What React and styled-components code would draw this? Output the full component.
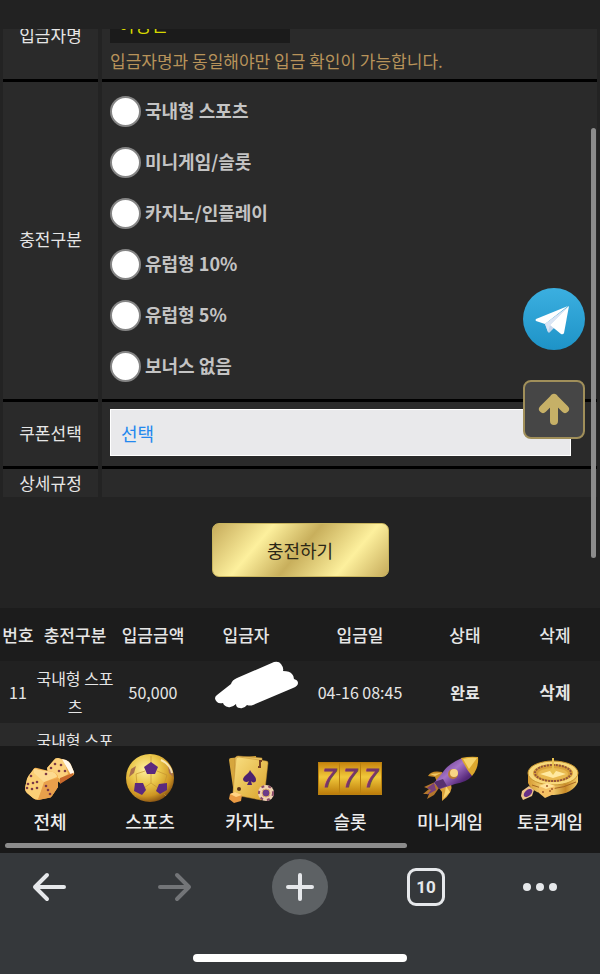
import React, { useLayoutEffect, useRef, useState } from "react";
import styled, { createGlobalStyle } from "styled-components";

const GlobalStyle = createGlobalStyle`
  * {
    box-sizing: border-box;
  }

  body {
    margin: 0;
    background: #232323;
    color: #e6e6e6;
    font-family: "Noto Sans CJK KR", "Noto Sans", sans-serif;
    font-size: 17px;
  }

  button, input, select {
    font-family: inherit;
  }
`

const Page = styled.div`
  display: flex;
  flex-direction: column;
  height: 100vh;
  overflow: hidden;
`

const StatusBar = styled.header`
  flex: none;
  height: 29px;
  background: #222222;
`

const Viewport = styled.div`
  position: relative;
  flex: 1;
  min-height: 0;
`

const Scroller = styled.main`
  height: 100%;
  overflow-y: auto;
  scrollbar-width: none;
`

const Form = styled.form`
  display: flex;
  flex-direction: column;
  padding: 0 3px;
`

const FormRow = styled.div`
  display: grid;
  grid-template-columns: 95px 1fr;
  gap: 4px;
`

const LabelCell = styled.div`
  display: flex;
  align-items: center;
  justify-content: center;
  padding-bottom: ${props => props.$last ? '0' : '3px'};
  background: #2a2a2a;
  border-bottom: ${props => props.$last ? 'none' : '3px solid #000000'};
  line-height: 28px;
`

const FieldCell = styled.div`
  padding: ${props => props.$padding || '0'};
  background: #2a2a2a;
  border-bottom: ${props => props.$last ? 'none' : '3px solid #000000'};
`

const NameInput = styled.input`
  display: block;
  width: 180px;
  height: 38px;
  padding: 0 8px;
  border: none;
  background: #1b1b1b;
  color: #d6d800;
  font-size: 18px;
`

const Hint = styled.p`
  margin: 0;
  line-height: 36px;
  color: #b8935a;
`

const Option = styled.label`
  display: flex;
  align-items: center;
  gap: 4px;
  height: 51px;
  color: #c4c4c4;
  font-size: 18px;
  font-weight: 700;
`

const OptionText = styled.span`
  padding-bottom: 4px;
`

const Radio = styled.input`
  appearance: none;
  width: 31px;
  height: 31px;
  margin: 0;
  border: 2px solid #858585;
  border-radius: 50%;
  background: #ffffff;

  &:checked {
    background: radial-gradient(circle, #1a73e8 45%, #ffffff 50%);
  }
`

const CouponSelect = styled.select`
  appearance: none;
  display: block;
  width: calc(100% - 18px);
  height: 47px;
  padding: 0 10px;
  border: 1px solid #ffffff;
  border-radius: 0;
  background: #e9e9eb;
  color: #2388ee;
  font-size: 18px;
`

const SubmitButton = styled.button`
  align-self: center;
  width: 177px;
  height: 54px;
  margin: 26px 0 31px;
  border: 1px solid #c9b65f;
  border-radius: 7px;
  background: linear-gradient(130deg, #c6ab5b 0%, #fdf09d 28%, #c8af5c 50%, #fdf09d 76%, #c6ab5b 100%);
  color: #2b2716;
  font-size: 18px;
`

const History = styled.table`
  width: 100%;
  table-layout: fixed;
  border-collapse: collapse;
`

const HeadCell = styled.th`
  width: ${props => props.$width};
  height: 53px;
  padding: 0;
  background: #1c1c1c;
  font-weight: 500;
  white-space: nowrap;
`

const HistoryRow = styled.tr`
  background: ${props => props.$alt ? '#2a2a2a' : '#212121'};
`

const Cell = styled.td`
  padding: 3px 0;
  height: 62px;
  font-size: 16px;
  font-weight: ${props => props.$bold ? 700 : 400};
  line-height: 28px;
  text-align: center;
`

const DeleteButton = styled.button`
  padding: 0;
  border: none;
  background: none;
  color: inherit;
  font-size: 17px;
  font-weight: 700;
`

const Scribble = styled.svg`
  display: block;
  width: 100%;
  height: 56px;
  overflow: visible;
`

const Floating = styled.aside`
  position: absolute;
  top: 259px;
  right: 15px;
  display: flex;
  flex-direction: column;
  gap: 30px;
`

const TelegramLink = styled.a`
  display: block;
  width: 62px;
  height: 62px;
`

const TopButton = styled.button`
  width: 62px;
  height: 59px;
  padding: 0;
  border: 2px solid #a08f5a;
  border-radius: 8px;
  background: #464646;
`

const ScrollThumb = styled.div`
  position: absolute;
  top: 99px;
  right: 4px;
  width: 5px;
  height: 430px;
  border-radius: 3px;
  background: #8c8c8c;
`

const GameMenu = styled.nav`
  flex: none;
  display: flex;
  flex-wrap: wrap;
  height: 107px;
  padding-top: 8px;
  background: #191919;
`

const GameLink = styled.a`
  display: flex;
  flex-direction: column;
  align-items: center;
  width: calc(100% / 6);
  color: #ededed;
  font-size: 18px;
  font-weight: 500;
  line-height: 34px;
  text-decoration: none;
  white-space: nowrap;
`

const GameIcon = styled.svg`
  width: 66px;
  height: 50px;
`

const MenuThumb = styled.div`
  width: 67%;
  height: 5px;
  margin: 0 5px;
  border-radius: 3px;
  background: #8c8c8c;
`

const BrowserBar = styled.footer`
  flex: none;
  display: flex;
  flex-direction: column;
  justify-content: space-between;
  height: 121px;
  padding: 6px 0 12px;
  background: #35383b;
`

const BrowserTools = styled.div`
  display: grid;
  grid-template-columns: 98fr 153fr 98fr 154fr 73fr;
  align-items: center;
  justify-items: center;
  padding-right: 24px;
`

const ToolButton = styled.button`
  display: flex;
  align-items: center;
  justify-content: center;
  width: 56px;
  height: 56px;
  padding: 0;
  border: none;
  border-radius: 50%;
  background: ${props => props.$filled ? '#5d6164' : 'none'};
  color: ${props => props.$muted ? '#737578' : '#e6e8eb'};
`

const TabCount = styled.span`
  width: 38px;
  height: 38px;
  border: 3px solid #e6e8eb;
  border-radius: 9px;
  font-family: Roboto, sans-serif;
  font-size: 17px;
  font-weight: 700;
  line-height: 32px;
`

const HomeBar = styled.div`
  align-self: center;
  width: 214px;
  height: 8px;
  border-radius: 4px;
  background: #ffffff;
`

const options = ["국내형 스포츠", "미니게임/슬롯", "카지노/인플레이", "유럽형 10%", "유럽형 5%", "보너스 없음"]

const columns = [
  ["번호", "6%"],
  ["충전구분", "13%"],
  ["입금금액", "13%"],
  ["입금자", "18%"],
  ["입금일", "20%"],
  ["상태", "15%"],
  ["삭제", "15%"],
]

const Dots = ({ points, r = 1.3, fill = "#7d3a46" }) => (
  <g fill={fill}>
    {points.map(([x, y]) => <circle key={x + "-" + y} cx={x} cy={y} r={r} />)}
  </g>
)

const DiceIcon = () => (
  <GameIcon viewBox="0 0 66 50" aria-hidden="true">
    <path d="M30 14 37 6Q38 4 41 4L49 6Q53 8 54 11L57 18Q58 21 55 22L43 29 31 20Z" fill="#e9a746" />
    <path d="M30 14 37 6Q38 4 41 4L47 6 51 20 43 25 31 18Z" fill="#fbd07c" />
    <path d="M45 5 49 6Q53 8 54 11L57 18Q57 20 54 21Z" fill="#fff7ea" />
    <path d="M43 24 56 19Q57 21 54 23L43 30Z" fill="#c8692c" />
    <Dots points={[[38, 10], [44, 11], [34, 14], [42, 17], [48, 17]]} />
    <path d="M16 16Q17 13 20 14L36 18Q41 20 41 23L41 33 35 42Q34 44 31 44L21 46Q18 46 16 44L10 39Q8 37 8 34L10 25Q11 22 13 20Z" fill="#f4b251" />
    <path d="M16 16Q17 14 20 15L28 28 21 45Q18 46 16 44L10 39Q8 37 8 34L10 25Q11 22 13 20Z" fill="#fbcf76" />
    <path d="M27 28 41 24V33L35 42Q34 44 31 44L21 46Z" fill="#e9a04b" />
    <path d="M17 15 36 18Q40 20 40 23L27 28 17 19Z" fill="#fdda90" />
    <Dots points={[[14, 22], [20, 28], [16, 29], [11, 30], [15, 35], [10, 34], [20, 34], [29, 20], [29, 32], [31, 36], [33, 40]]} />
  </GameIcon>
)

const BallIcon = () => (
  <GameIcon viewBox="0 0 66 50" aria-hidden="true">
    <defs>
      <radialGradient id="ball" cx="40%" cy="32%" r="70%">
        <stop offset="0" stopColor="#fff0a0" />
        <stop offset="0.45" stopColor="#eac74a" />
        <stop offset="0.8" stopColor="#cd9423" />
        <stop offset="1" stopColor="#8a5514" />
      </radialGradient>
    </defs>
    <circle cx="33" cy="24" r="24" fill="url(#ball)" />
    <path d="M34 20V29M28 17 19 20M40 17 50 21M19 20 20 30M50 21 47 31M27 34 34 29 41 34M34 9V2M20 39 18 43M47 40 49 42" fill="none" stroke="#c49430" strokeWidth="0.7" />
    <path d="M34 8 41 13 38 20H30L27 13Z" fill="#5b297e" />
    <path d="M18 29 26 29 29 36 25 41 17 37Z" fill="#5b297e" />
    <path d="M50 29 42 30 39 37 43 40 50 36Z" fill="#5b297e" />
    <path d="M14 15 19 12 17 19 12 23Z" fill="#a9704f" />
    <path d="M51 12 55 17 56 23 52 19Z" fill="#a9704f" />
    <path d="M44 6Q53 10 55 19" fill="none" stroke="#fff6cf" strokeWidth="2" opacity="0.8" />
  </GameIcon>
)

const CardsIcon = () => (
  <GameIcon viewBox="0 0 66 50" aria-hidden="true">
    <defs>
      <linearGradient id="card" x1="0" y1="0" x2="1" y2="1">
        <stop offset="0" stopColor="#f9df82" />
        <stop offset="1" stopColor="#d9a32b" />
      </linearGradient>
    </defs>
    <path d="M12 6Q12 4 14 4L39 2 43 37 17 40Z" fill="#d6a63d" />
    <path d="M18 4Q19 2 21 2L45 4 46 42 17 38Z" fill="#ecc765" stroke="#b9842b" strokeWidth="0.5" />
    <path d="M19 5Q19 3 22 3L49 7Q51 7 51 9L47 44Q46 46 44 46L18 41Q16 40 16 38Z" fill="url(#card)" stroke="#c58f30" strokeWidth="0.5" />
    <path d="M33 16C35 20 39 22 39 26 39 29 35 29 34 27L35 31H30L32 27C30 29 26 28 26 25 27 21 32 20 33 16Z" fill="#4b216f" />
    <path d="M43 7V13H41M42 7H45" fill="none" stroke="#754022" strokeWidth="2" />
    <circle cx="22" cy="35" r="2" fill="#553016" />
    <path d="M13 40 18 38 25 41 24 47 17 49 12 45Z" fill="#e99a43" />
    <path d="M13 40 18 38 25 41 19 43Z" fill="#ffd384" />
    <circle cx="49" cy="39" r="8" fill="#f0d2b4" />
    <circle cx="49" cy="39" r="7" fill="none" stroke="#8a4a68" strokeWidth="2" strokeDasharray="3 4" />
    <circle cx="49" cy="39" r="4" fill="#6c3b88" stroke="#e2b469" />
  </GameIcon>
)

const SlotIcon = () => (
  <GameIcon viewBox="0 0 66 50" aria-hidden="true">
    <defs>
      <linearGradient id="reel" x1="0" y1="0" x2="0" y2="1">
        <stop offset="0" stopColor="#c8860f" />
        <stop offset="0.45" stopColor="#f1c83b" />
        <stop offset="1" stopColor="#bd7d0b" />
      </linearGradient>
    </defs>
    <rect x="1" y="8" width="64" height="33" fill="#b9800f" />
    {[2, 23, 44].map(x => (
      <g key={x}>
        <rect x={x} y="9" width="20" height="31" fill="url(#reel)" />
        <text x={x + 10} y="33" textAnchor="middle" fontFamily="Liberation Sans" fontStyle="italic" fontSize="25" fill="#74366a" stroke="#74366a">7</text>
      </g>
    ))}
  </GameIcon>
)

const RocketIcon = () => (
  <GameIcon viewBox="0 0 66 50" aria-hidden="true">
    <defs>
      <linearGradient id="hull" x1="0" y1="0" x2="1" y2="1">
        <stop offset="0.1" stopColor="#5a2d84" />
        <stop offset="0.45" stopColor="#a473c5" />
        <stop offset="0.75" stopColor="#562879" />
        <stop offset="1" stopColor="#371950" />
      </linearGradient>
    </defs>
    <path d="M11 22Q14 16 25 18L26 20 20 28 18 23Z" fill="#c78b26" />
    <path d="M13 20 24 19 18 22Z" fill="#f0c967" />
    <path d="M34 30Q37 38 25 47L25 38 22 34Z" fill="#dba23a" />
    <path d="M29 32 33 38 26 45 28 38Z" fill="#f7d36e" />
    <path d="M18 28 7 33 12 35 6 40 12 40 10 45 17 41 22 34Z" fill="#b4772c" />
    <path d="M17 29 10 34 14 36 10 41 19 36Z" fill="#7a417c" />
    <path d="M45 4Q31 10 26 18L17 29 23 35 38 30Q50 28 55 22Z" fill="url(#hull)" />
    <path d="M17 28 26 25 30 32 22 35Z" fill="#57316f" />
    <path d="M44 4Q53 2 61 3 62 14 55 22 49 15 44 4Z" fill="#dca72e" />
    <path d="M46 5Q54 3 60 4L52 15Z" fill="#f5d36b" />
    <circle cx="36" cy="20" r="5" fill="#bb7c34" />
    <circle cx="37" cy="19" r="4" fill="#f8d685" />
  </GameIcon>
)

const RouletteIcon = () => (
  <GameIcon viewBox="0 0 66 50" aria-hidden="true">
    <defs>
      <linearGradient id="rim" x1="0" y1="0" x2="1" y2="0">
        <stop offset="0" stopColor="#d79a31" />
        <stop offset="0.4" stopColor="#fae285" />
        <stop offset="0.75" stopColor="#c88a28" />
        <stop offset="1" stopColor="#f3cd68" />
      </linearGradient>
    </defs>
    <path d="M11 19V29Q16 41 37 41 56 40 61 28V18Z" fill="url(#rim)" />
    <ellipse cx="36" cy="19" rx="25" ry="12" fill="#f7d87b" stroke="#c9952f" />
    <ellipse cx="36" cy="19" rx="20" ry="9" fill="#d9a23a" />
    <ellipse cx="36" cy="19" rx="18" ry="8" fill="none" stroke="#94553a" strokeWidth="2" strokeDasharray="2 1" />
    <ellipse cx="36" cy="20" rx="15" ry="6" fill="#e9b94f" />
    <path d="M23 20 36 16 49 20 36 24Z" fill="#ffe9a0" />
    <path d="M35 4H37V14L39 17 36 21 33 17 35 14Z" fill="#e9c251" />
    <path d="M15 31Q34 40 59 28" fill="none" stroke="#a56521" />
    <path d="M22 32 30 29 38 32 37 40 28 44 22 39Z" fill="#f4c063" />
    <path d="M22 32 30 29 38 32 29 35Z" fill="#ffe39a" />
    <Dots points={[[26, 38], [33, 37], [35, 35], [30, 32]]} r={1} fill="#a15a28" />
    <path d="M5 37 12 32 17 36 15 42 6 46 4 42Z" fill="#edc38b" />
    <ellipse cx="11" cy="39" rx="5" ry="3" transform="rotate(-40 11 39)" fill="#673087" />
  </GameIcon>
)

const games = [
  ["전체", DiceIcon],
  ["스포츠", BallIcon],
  ["카지노", CardsIcon],
  ["슬롯", SlotIcon],
  ["미니게임", RocketIcon],
  ["토큰게임", RouletteIcon],
]

function ChargeForm() {
  const [bonus, setBonus] = useState("")

  return (
    <Form onSubmit={e => e.preventDefault()}>
      <FormRow>
        <LabelCell><label htmlFor="depositor">입금자명</label></LabelCell>
        <FieldCell $padding="12px 8px 0">
          <NameInput id="depositor" defaultValue="이정민" />
          <Hint>입금자명과 동일해야만 입금 확인이 가능합니다.</Hint>
        </FieldCell>
      </FormRow>
      <FormRow role="radiogroup" aria-labelledby="bonus-label">
        <LabelCell id="bonus-label">충전구분</LabelCell>
        <FieldCell $padding="4px 8px 7px">
          {options.map(option => (
            <Option key={option}>
              <Radio type="radio" name="bonus" checked={bonus === option} onChange={() => setBonus(option)} />
              <OptionText>{option}</OptionText>
            </Option>
          ))}
        </FieldCell>
      </FormRow>
      <FormRow>
        <LabelCell><label htmlFor="coupon">쿠폰선택</label></LabelCell>
        <FieldCell $padding="7px 8px 10px">
          <CouponSelect id="coupon">
            <option>선택</option>
          </CouponSelect>
        </FieldCell>
      </FormRow>
      <FormRow>
        <LabelCell $last>상세규정</LabelCell>
        <FieldCell $last />
      </FormRow>
      <SubmitButton type="submit">충전하기</SubmitButton>
    </Form>
  )
}

function DepositHistory() {
  return (
    <History>
      <thead>
        <tr>
          {columns.map(([name, width]) => <HeadCell key={name} $width={width}>{name}</HeadCell>)}
        </tr>
      </thead>
      <tbody>
        <HistoryRow>
          <Cell>11</Cell>
          <Cell>국내형 스포츠</Cell>
          <Cell>50,000</Cell>
          <Cell>
            <Scribble viewBox="192 664 108 56" aria-hidden="true">
              <path d="M217 695 231 684Q232 680 237 678L274 662Q279 661 281 664 284 668 283 671 290 671 292 674 294 676 294 679 298 680 298 683 298 686 293 688L253 705Q250 706 247 705 244 709 240 708 236 708 236 704 232 708 228 707 224 706 223 703 219 704 217 702 213 698 217 695Z" fill="#ffffff" />
            </Scribble>
          </Cell>
          <Cell>04-16 08:45</Cell>
          <Cell $bold>완료</Cell>
          <Cell><DeleteButton>삭제</DeleteButton></Cell>
        </HistoryRow>
        <HistoryRow $alt>
          <Cell />
          <Cell>국내형 스포츠</Cell>
          <Cell />
          <Cell />
          <Cell />
          <Cell />
          <Cell><DeleteButton>삭제</DeleteButton></Cell>
        </HistoryRow>
      </tbody>
    </History>
  )
}

function FloatingLinks({ onTop }) {
  return (
    <Floating>
      <TelegramLink href="#telegram" aria-label="Telegram">
        <svg width="62" height="62" viewBox="0 0 62 62">
          <defs>
            <linearGradient id="telegram" x1="0" y1="0" x2="0" y2="1">
              <stop offset="0" stopColor="#3bafe0" />
              <stop offset="1" stopColor="#1e93c7" />
            </linearGradient>
          </defs>
          <circle cx="31" cy="31" r="31" fill="url(#telegram)" />
          <path d="M46 18 22 36 25 44Q26 46 28 43L32 39Z" fill="#c3d6ec" />
          <path d="M45 18 13 31Q12 32 13 33L22 36Z" fill="#ffffff" />
          <path d="M46 18 27 37 38 46Q40 47 41 45Z" fill="#ffffff" />
          <path d="M45 19 22 36 25 44 27 37Z" fill="#dbe5f4" />
        </svg>
      </TelegramLink>
      <TopButton type="button" aria-label="맨 위로" onClick={onTop}>
        <svg width="58" height="55" viewBox="0 0 58 55">
          <path d="M29 39V16M18 27 29 16 40 27" fill="none" stroke="#c6b067" strokeWidth="8" strokeLinecap="round" strokeLinejoin="round" />
        </svg>
      </TopButton>
    </Floating>
  )
}

function BrowserToolbar() {
  return (
    <BrowserBar>
      <BrowserTools>
        <ToolButton aria-label="Back">
          <svg width="34" height="34" fill="none" stroke="currentColor" strokeWidth="4" strokeLinecap="round" strokeLinejoin="round">
            <path d="M32 17H3M15 5 3 17 15 29" />
          </svg>
        </ToolButton>
        <ToolButton aria-label="Forward" $muted>
          <svg width="34" height="34" fill="none" stroke="currentColor" strokeWidth="4" strokeLinecap="round" strokeLinejoin="round">
            <path d="M2 17H31M19 5 31 17 19 29" />
          </svg>
        </ToolButton>
        <ToolButton aria-label="New tab" $filled>
          <svg width="30" height="30" fill="none" stroke="currentColor" strokeWidth="4" strokeLinecap="round">
            <path d="M3 15H27M15 3V27" />
          </svg>
        </ToolButton>
        <ToolButton aria-label="Tabs"><TabCount>10</TabCount></ToolButton>
        <ToolButton aria-label="Menu">
          <svg width="36" height="10" fill="currentColor">
            <circle cx="5" cy="5" r="4" />
            <circle cx="18" cy="5" r="4" />
            <circle cx="31" cy="5" r="4" />
          </svg>
        </ToolButton>
      </BrowserTools>
      <HomeBar />
    </BrowserBar>
  )
}

function App() {
  const scroller = useRef(null)

  // open just past the top of the form
  useLayoutEffect(() => {
    scroller.current.scrollTop = 36
  }, [])

  return (
    <Page>
      <GlobalStyle />
      <StatusBar />
      <Viewport>
        <Scroller ref={scroller}>
          <ChargeForm />
          <DepositHistory />
        </Scroller>
        <FloatingLinks onTop={() => scroller.current.scrollTo({ top: 0 })} />
        <ScrollThumb />
      </Viewport>
      <GameMenu>
        {games.map(([name, Icon]) => (
          <GameLink key={name} href="#games">
            <Icon />
            {name}
          </GameLink>
        ))}
        <MenuThumb />
      </GameMenu>
      <BrowserToolbar />
    </Page>
  )
}

export default App
